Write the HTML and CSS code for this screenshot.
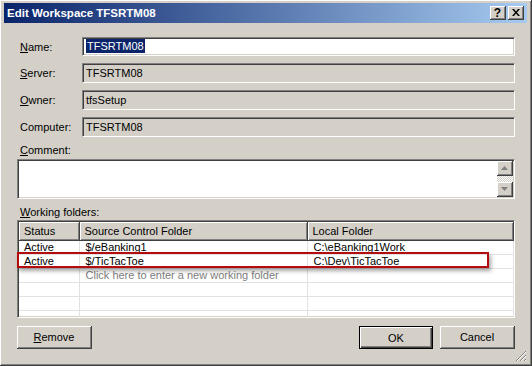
FILE: index.html
```html
<!DOCTYPE html>
<html lang="en">
<head>
  <meta charset="UTF-8">
  <title>Edit Workspace TFSRTM08</title>
  <link rel="stylesheet" href="styles.css">
</head>
<body>
  <div class="window">
    <div class="titlebar">
      <span class="title">Edit Workspace TFSRTM08</span>
      <div class="caption-btns">
        <span class="cbtn help">?</span>
        <span class="cbtn">
          <svg width="8" height="7" viewBox="0 0 8 7"><path d="M0 0h2l2 2.5L6 0h2L5 3.5 8 7H6L4 4.5 2 7H0l3-3.5z" fill="#000"/></svg>
        </span>
      </div>
    </div>

    <div class="content">
      <div class="field-row">
        <label><u>N</u>ame:</label>
        <div class="field edit name"><span class="sel">TFSRTM08</span></div>
      </div>
      <div class="field-row">
        <label><u>S</u>erver:</label>
        <div class="field">TFSRTM08</div>
      </div>
      <div class="field-row">
        <label><u>O</u>wner:</label>
        <div class="field">tfsSetup</div>
      </div>
      <div class="field-row">
        <label>Computer:</label>
        <div class="field">TFSRTM08</div>
      </div>

      <div class="caption"><u>C</u>omment:</div>
      <div class="memo">
        <div class="vscroll">
          <span class="sbtn"><svg width="7" height="4" viewBox="0 0 7 4"><path d="M3.5 0L7 4H0z" fill="#808080"/></svg></span>
          <span class="track"></span>
          <span class="sbtn"><svg width="7" height="4" viewBox="0 0 7 4"><path d="M0 0h7L3.5 4z" fill="#808080"/></svg></span>
        </div>
      </div>

      <div class="caption folders"><u>W</u>orking folders:</div>
      <div class="grid">
        <table>
          <colgroup>
            <col class="c-status">
            <col class="c-source">
            <col class="c-local">
          </colgroup>
          <thead>
            <tr><th>Status</th><th>Source Control Folder</th><th>Local Folder</th></tr>
          </thead>
          <tbody>
            <tr><td>Active</td><td>$/eBanking1</td><td>C:\eBanking1Work</td></tr>
            <tr><td>Active</td><td>$/TicTacToe</td><td>C:\Dev\TicTacToe</td></tr>
            <tr><td></td><td class="hint">Click here to enter a new working folder</td><td></td></tr>
            <tr><td></td><td></td><td></td></tr>
            <tr><td></td><td></td><td></td></tr>
            <tr><td></td><td></td><td></td></tr>
          </tbody>
        </table>
      </div>

      <div class="buttons">
        <button class="btn"><u>R</u>emove</button>
        <button class="btn default">OK</button>
        <button class="btn">Cancel</button>
      </div>
    </div>

    <div class="highlight"></div>
    <div class="grip">
      <svg width="12" height="12" viewBox="0 0 12 12">
        <path d="M11 1L1 11M11 5L5 11M11 9L9 11" stroke="#808080" stroke-width="1"/>
        <path d="M11 2L2 11M11 6L6 11M11 10L10 11" stroke="#fff" stroke-width="1"/>
      </svg>
    </div>
  </div>
</body>
</html>
```

FILE: styles.css
```css
body {
  margin: 0;
  background: #d4d0c8;
  font-family: "Liberation Sans", Arial, sans-serif;
  font-size: 11px;
  color: #000;
}
.window {
  position: relative;
  width: 532px;
  height: 366px;
  box-sizing: border-box;
  padding: 3px 4px 3px 4px;
  background: #d4d0c8;
  border-right: 1px solid #404040;
  border-bottom: 1px solid #404040;
  box-shadow: inset 1px 1px 0 #fff, inset -1px -1px 0 #808080;
  overflow: hidden;
}
.titlebar {
  height: 20px;
  display: flex;
  align-items: center;
  justify-content: space-between;
  padding: 0 3px;
  background: linear-gradient(to right, #0a246a, #a6caf0);
}
.title {
  color: #fff;
  font-weight: bold;
  font-size: 11.5px;
}
.caption-btns {
  display: flex;
  gap: 2px;
}
.cbtn {
  width: 16px;
  height: 14px;
  box-sizing: border-box;
  display: flex;
  align-items: center;
  justify-content: center;
  background: #d4d0c8;
  border-right: 1px solid #404040;
  border-bottom: 1px solid #404040;
  box-shadow: inset 1px 1px 0 #fff, inset -1px -1px 0 #808080;
}
.help {
  font-weight: bold;
  font-size: 12px;
  line-height: 12px;
}
.content {
  padding: 14px 12px 0 13px;
}
.field-row {
  display: flex;
  align-items: center;
  margin-bottom: 7px;
}
.field-row label {
  width: 62px;
  padding-left: 3px;
}
.field {
  flex: 1;
  height: 20px;
  box-sizing: border-box;
  padding: 2px 0 0 3px;
  line-height: 15px;
  border-top: 1px solid #808080;
  border-left: 1px solid #808080;
  border-right: 1px solid #fff;
  border-bottom: 1px solid #fff;
  box-shadow: inset 1px 1px 0 #404040, inset -1px -1px 0 #d4d0c8;
}
.field.name {
  height: 19px;
  padding-top: 1px;
}
.edit {
  background: #fff;
}
.sel {
  background: #0a246a;
  color: #fff;
  padding: 1px 1px;
}
.caption {
  height: 14px;
  line-height: 14px;
  margin-top: -1px;
  padding-left: 3px;
}
.memo {
  position: relative;
  height: 40px;
  margin-top: 2px;
  box-sizing: border-box;
  background: #fff;
  border-top: 1px solid #808080;
  border-left: 1px solid #808080;
  border-right: 1px solid #fff;
  border-bottom: 1px solid #fff;
  box-shadow: inset 1px 1px 0 #404040, inset -1px -1px 0 #d4d0c8;
}
.vscroll {
  position: absolute;
  top: 1px;
  right: 1px;
  bottom: 1px;
  width: 16px;
  display: flex;
  flex-direction: column;
}
.sbtn {
  height: 15px;
  display: flex;
  align-items: center;
  justify-content: center;
  box-sizing: border-box;
  background: #d4d0c8;
  border-right: 1px solid #404040;
  border-bottom: 1px solid #404040;
  box-shadow: inset 1px 1px 0 #fff, inset -1px -1px 0 #808080;
}
.track {
  flex: 1;
  background: repeating-conic-gradient(#fff 0 25%, #d4d0c8 0 50%) 0 0 / 2px 2px;
}
.folders {
  margin-top: 6px;
}
.grid {
  height: 98px;
  margin-top: 1px;
  box-sizing: border-box;
  overflow: hidden;
  background: #fff;
  border-top: 1px solid #808080;
  border-left: 1px solid #808080;
  border-right: 1px solid #fff;
  border-bottom: 1px solid #fff;
  box-shadow: inset 1px 1px 0 #404040, inset -1px -1px 0 #d4d0c8;
  padding: 1px;
}
table {
  width: 494px;
  table-layout: fixed;
  border-collapse: collapse;
}
.c-status { width: 60px; }
.c-source { width: 228px; }
.c-local { width: 206px; }
th {
  height: 18px;
  padding: 0 0 0 5px;
  text-align: left;
  font-weight: normal;
  background: #d4d0c8;
  border-right: 1px solid #404040;
  border-bottom: 1px solid #404040;
  box-shadow: inset 1px 1px 0 #fff, inset -1px -1px 0 #808080;
}
td {
  height: 13px;
  padding: 0 0 0 5px;
  line-height: 13px;
  white-space: nowrap;
  overflow: hidden;
  border-right: 1px solid #e2e2e2;
  border-bottom: 1px solid #e2e2e2;
}
td + td {
  padding-left: 6px;
}
.hint {
  color: #808080;
}
.buttons {
  display: flex;
  margin-top: 8px;
  gap: 7px;
}
.btn {
  width: 75px;
  height: 23px;
  box-sizing: border-box;
  padding: 0;
  font-family: "Liberation Sans", Arial, sans-serif;
  font-size: 11px;
  color: #000;
  background: #d4d0c8;
  border: none;
  border-right: 1px solid #404040;
  border-bottom: 1px solid #404040;
  box-shadow: inset 1px 1px 0 #fff, inset -1px -1px 0 #808080;
}
.btn.default {
  margin-left: auto;
  width: 74px;
  border: 1px solid #000;
  box-shadow: inset 1px 1px 0 #fff, inset -1px -1px 0 #404040, inset -2px -2px 0 #808080;
}
.highlight {
  position: absolute;
  left: 17px;
  top: 252px;
  width: 472px;
  height: 16px;
  box-sizing: border-box;
  border: 2px solid #b40c0c;
  box-shadow: 2px 3px 4px rgba(0, 0, 0, 0.35);
}
.grip {
  position: absolute;
  right: 4px;
  bottom: 3px;
  width: 12px;
  height: 12px;
}
```
